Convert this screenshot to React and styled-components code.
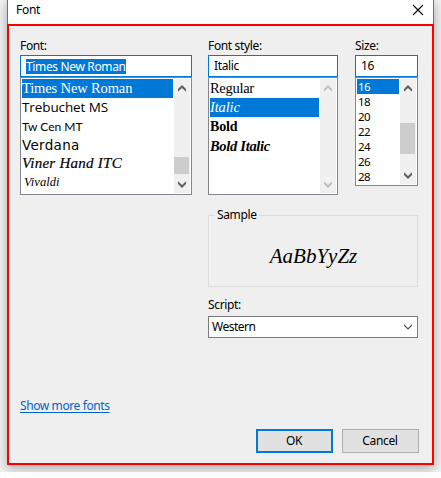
import React from "react";
import styled, { createGlobalStyle, css } from "styled-components";

const Global = createGlobalStyle`
  *, *::before, *::after { box-sizing: border-box; }
  html, body { margin: 0; height: 478px; overflow: hidden; background: #fff; }
  body { font: 12px/16px "Noto Sans", "Open Sans", sans-serif; color: #000; }
`;

const Desktop = styled.div`
  width: 441px;
  height: 472px;
  padding-left: 7px;
  overflow: hidden;
  background: #f6f6f6;
`;

const Dialog = styled.section`
  width: 427px;
  height: 465px;
  background: #efefef;
  box-shadow: 0 3px 12px 1px rgba(0, 0, 0, 0.3);
`;

const TitleBar = styled.header`
  height: 24px;
  padding: 2px 9px 6px 8px;
  display: flex;
  align-items: center;
  justify-content: space-between;
  background: #fff;
  border-left: 1px solid #707070;
  border-right: 1px solid #707070;
`;

const Text = styled.span`
  display: inline-block;
  white-space: pre;
  letter-spacing: ${(p) => p.$track ?? -0.35}px;
`;

const CloseButton = styled.button`
  width: 12px;
  height: 12px;
  padding: 0;
  border: 0;
  background: none;
  display: flex;
  margin-top: -1px;
`;

const Body = styled.main`
  height: 441px;
  border: 2px solid #fe0000;
  padding: 12px 12px 10px 11px;
  display: flex;
  flex-direction: column;
`;

const Pickers = styled.div`
  height: 157px;
  display: grid;
  grid-template-columns: 172px 130px 64px;
  column-gap: 16px;
  align-items: start;

  & > :last-child { margin-left: 1px; width: 63px; }
`;

const Field = styled.div`
  display: flex;
  flex-direction: column;
`;

const Label = styled.label`
  height: ${(p) => p.$height ?? 17}px;
`;

const Input = styled.div`
  height: 22px;
  padding: 0 5px;
  display: flex;
  align-items: center;
  background: #fff;
  border: 1px solid #0078d7;
`;

const Selected = styled.span`
  height: 15px;
  line-height: 15px;
  color: #fff;
  background: #0078d7;
`;

const ListBox = styled.div`
  height: ${(p) => p.$height}px;
  border: 1px solid #828790;
  padding: 1px;
  display: flex;
  gap: 1px;
  background: #fff;
`;

const Options = styled.div`
  flex: 1;
  min-width: 0;
`;

const faces = {
  ui: css`font: 11.5px "Noto Sans", sans-serif;`,
  times: css`font: 14.5px "Liberation Serif", serif;`,
  italic: css`font: italic 14.5px "Liberation Serif", serif;`,
  bold: css`font: bold 14px "Liberation Serif", serif;`,
  boldItalic: css`font: italic bold 14.5px "Liberation Serif", serif;`,
  trebuchet: css`font: 13.5px "Open Sans", sans-serif;`,
  century: css`font: 12px Lato, sans-serif;`,
  verdana: css`font: 13.5px "DejaVu Sans", sans-serif;`,
  hand: css`font: italic 15px "Liberation Serif", serif; -webkit-text-stroke: 0.2px;`,
  script: css`font: italic 12.5px "Liberation Serif", serif;`,
};

const Option = styled.div`
  ${(p) => faces[p.$face]}
  height: ${(p) => p.$height}px;
  line-height: ${(p) => p.$height}px;
  padding-left: ${(p) => p.$indent ?? 0}px;
  color: ${(p) => (p.$active ? "#fff" : "#000")};
  background: ${(p) => (p.$active ? "#0078d7" : "transparent")};
`;

const Scrollbar = styled.div`
  width: 16px;
  display: flex;
  flex-direction: column;
  justify-content: space-between;
  align-items: center;
  padding: 6px 1px 5px 0;
  background: #f0f0f0;
  color: ${(p) => (p.$disabled ? "#bfbfbf" : "#606060")};
`;

const Thumb = styled.div`
  width: 15px;
  height: ${(p) => p.$height}px;
  margin: auto 0 ${(p) => p.$gap}px;
  background: #cdcdcd;
`;

const Lower = styled.div`
  width: 210px;
  margin-left: 188px;
  margin-top: 12px;
`;

const Sample = styled.fieldset`
  height: 80px;
  margin: 0;
  padding: 0;
  border: 1px solid #dcdcdc;
  min-width: 0;
`;

const Legend = styled.legend`
  height: 16px;
  margin-left: 6px;
  padding: 0 2px;
`;

const Preview = styled.div`
  height: 57px;
  padding: 15px 0 0 1px;
  text-align: center;
  font: italic 21px/36px "Liberation Serif", serif;
`;

const Script = styled.div`
  margin-top: 10px;
`;

const Select = styled.div`
  height: 22px;
  padding: 0 4px 0 3px;
  display: flex;
  align-items: center;
  justify-content: space-between;
  background: #fff;
  border: 1px solid #7a7a7a;
`;

const Link = styled.a`
  margin-top: 60px;
  height: 16px;
  color: #0066cc;

  ${Text} {
    text-decoration: underline;
    text-decoration-skip-ink: none;
    text-underline-offset: 2px;
  }
`;

const Actions = styled.footer`
  margin-top: auto;
  padding-right: 1px;
  display: flex;
  justify-content: flex-end;
  gap: 9px;
`;

const Button = styled.button`
  width: 77px;
  height: 24px;
  padding: 0 1px 0 0;
  font: inherit;
  color: #000;
  background: #e1e1e1;
  border: ${(p) => (p.$primary ? "2px solid #0078d7" : "1px solid #adadad")};
`;

const Arrow = ({ up }) => (
  <svg width="8" height="7" viewBox="0 0 8 7" fill="currentColor">
    <path d={up ? "M0 4L4 0L8 4V6.8L4 2.9L0 6.8Z" : "M0 .2L4 4.1L8 .2V3L4 7L0 3Z"} />
  </svg>
);

const fonts = [
  ["Times New Roman", "times", 19, -0.13, 0, true],
  ["Trebuchet MS", "trebuchet", 19, -0.1],
  ["Tw Cen MT", "century", 19, 0],
  ["Verdana", "verdana", 19, 0.3],
  ["Viner Hand ITC", "hand", 16, 0.25],
  ["Vivaldi", "script", 22, 0.05, 2],
];

const styles = [
  ["Regular", "times", 19, -0.3],
  ["Italic", "italic", 19, -0.15, 0, true],
  ["Bold", "bold", 20, -0.2],
  ["Bold Italic", "boldItalic", 18, -0.3],
];

const sizes = [16, 18, 20, 22, 24, 26, 28].map((n, i) => [n, "ui", 15, -0.6, 1, i === 0]);

function List({ items, height, thumb, disabled }) {
  return (
    <ListBox $height={height}>
      <Options>
        {items.map(([label, face, rowHeight, track, indent, active]) => (
          <Option key={label} $face={face} $height={rowHeight} $indent={indent} $active={active}>
            <Text $track={track}>{label}</Text>
          </Option>
        ))}
      </Options>
      <Scrollbar $disabled={disabled}>
        <Arrow up />
        {thumb && <Thumb $height={thumb[0]} $gap={thumb[1]} />}
        <Arrow />
      </Scrollbar>
    </ListBox>
  );
}

export default function App() {
  return (
    <>
      <Global />
      <Desktop>
        <Dialog>
          <TitleBar>
            <Text $track={-0.3}>Font</Text>
            <CloseButton aria-label="Close">
              <svg width="12" height="12" viewBox="0 0 12 12" stroke="#000" strokeWidth="1.1">
                <path d="M1 1L11 11M11 1L1 11" />
              </svg>
            </CloseButton>
          </TitleBar>
          <Body>
            <Pickers>
              <Field>
                <Label><Text>Font:</Text></Label>
                <Input><Selected><Text>Times New Roman</Text></Selected></Input>
                <List items={fonts} height={118} thumb={[17, 7]} />
              </Field>
              <Field>
                <Label><Text>Font style:</Text></Label>
                <Input><Text>Italic</Text></Input>
                <List items={styles} height={118} disabled />
              </Field>
              <Field>
                <Label><Text>Size:</Text></Label>
                <Input><Text>16</Text></Input>
                <List items={sizes} height={109} thumb={[31, 18]} />
              </Field>
            </Pickers>
            <Lower>
              <Sample>
                <Legend><Text>Sample</Text></Legend>
                <Preview><Text $track={0}>AaBbYyZz</Text></Preview>
              </Sample>
              <Script>
                <Label as="div" $height={19}><Text>Script:</Text></Label>
                <Select>
                  <Text $track={-0.5}>Western</Text>
                  <svg width="10" height="6" viewBox="0 0 10 6" fill="none" stroke="#555" strokeWidth="1.1">
                    <path d="M1 1L5 5L9 1" />
                  </svg>
                </Select>
              </Script>
            </Lower>
            <Link><Text $track={-0.4}>Show more fonts</Text></Link>
            <Actions>
              <Button $primary><Text>OK</Text></Button>
              <Button><Text>Cancel</Text></Button>
            </Actions>
          </Body>
        </Dialog>
      </Desktop>
    </>
  );
}
